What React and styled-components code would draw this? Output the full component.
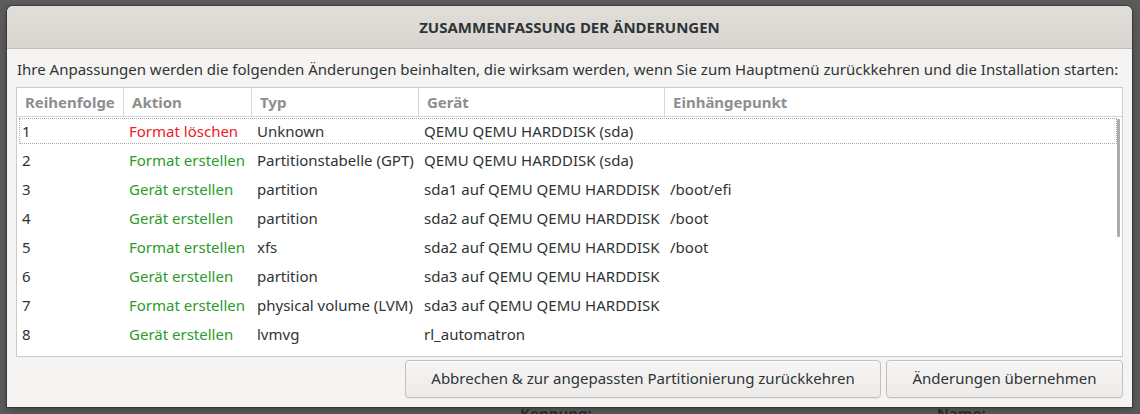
import styled, { createGlobalStyle } from "styled-components";

const GlobalStyle = createGlobalStyle`
  html, body {
    margin: 0;
    padding: 0;
    background: #5a5a5a;
  }
  body {
    font-family: "Noto Sans", "Open Sans", sans-serif;
    font-size: 15px;
    color: #2e3436;
  }
`;

// Dimmed installer window behind the dialog
const Screen = styled.div`
  width: 1140px;
  height: 414px;
  overflow: hidden;
  background: #5b5b5b;
  display: flex;
  flex-direction: column;
  padding: 6px 8px 0 7px;
  box-sizing: border-box;
`;

const Dialog = styled.div`
  width: 1125px;
  height: 401px;
  flex-shrink: 0;
  display: flex;
  flex-direction: column;
  background: #f5f4f2;
  border-radius: 6px 6px 0 0;
  box-shadow: 0 0 0 1px rgba(0, 0, 0, 0.25), 0 2px 6px rgba(0, 0, 0, 0.35);
  overflow: hidden;
`;

const TitleBar = styled.div`
  height: 42px;
  display: flex;
  align-items: center;
  justify-content: center;
  background: linear-gradient(#e1deda, #d9d6d2);
  border-bottom: 1px solid #c4bfba;
  font-weight: 700;
  font-size: 15px;
  color: #2e3436;
`;

const Body = styled.div`
  flex: 1;
  display: flex;
  flex-direction: column;
  padding: 0 9px 0 9px;
`;

const Intro = styled.div`
  height: 38px;
  display: flex;
  align-items: center;
  padding: 2px 0 0 1px;
  box-sizing: border-box;
  white-space: nowrap;
  color: #2e3436;
`;

const TableBox = styled.div`
  height: 268px;
  background: #fff;
  border: 1px solid #cdcbc8;
  position: relative;
  overflow: hidden;
`;

const Grid = styled.div`
  display: grid;
  grid-template-columns: 107px 128px 167px 246px 1fr;
`;

const HeadCell = styled.div`
  height: 29px;
  display: flex;
  align-items: center;
  padding: 0 0 1px 8px;
  box-sizing: border-box;
  font-weight: 700;
  color: #8e8e8e;
  border-bottom: 1px solid #d8d6d3;
  border-right: ${({ $last }) => ($last ? "none" : "1px solid #d8d6d3")};
  white-space: nowrap;
`;

const Row = styled.div`
  grid-column: 1 / -1;
  display: grid;
  grid-template-columns: 107px 128px 167px 246px 1fr;
  height: 28.9px;
  position: relative;
`;

const Focus = styled.div`
  position: absolute;
  left: 2px;
  right: 5px;
  top: 1px;
  bottom: 2px;
  border: 1px dotted #a9a9a9;
  pointer-events: none;
`;

const Cell = styled.div`
  display: flex;
  align-items: center;
  padding-left: 5px;
  white-space: nowrap;
  color: ${({ $tone }) =>
    $tone === "red" ? "#ef2020" : $tone === "green" ? "#2b9b2b" : "#2e3436"};
`;

const Scrollbar = styled.div`
  position: absolute;
  right: 2px;
  top: 31px;
  width: 3px;
  height: 118px;
  background: #a8afaf;
  border-radius: 1px;
`;

const Buttons = styled.div`
  display: flex;
  justify-content: flex-end;
  gap: 5px;
  padding-top: 3px;
`;

const Button = styled.button`
  height: 38px;
  width: ${({ $w }) => $w}px;
  padding: 0 0 2px;
  border: 1px solid #c3bfba;
  border-radius: 4px;
  background: linear-gradient(#f6f5f4, #edebe9);
  font-family: inherit;
  font-size: 15px;
  color: #2e3436;
  box-shadow: inset 0 1px #fff, 0 1px rgba(0, 0, 0, 0.05);
`;

const Behind = styled.div`
  display: flex;
  height: 20px;
  font-weight: 700;
  color: #2a2a2a;
  font-size: 15px;
  margin-top: -4px;
`;

const BehindLabel = styled.span`
  margin-left: ${({ $x }) => $x}px;
`;

const rows = [
  ["1", "Format löschen", "red", "Unknown", "QEMU QEMU HARDDISK (sda)", ""],
  ["2", "Format erstellen", "green", "Partitionstabelle (GPT)", "QEMU QEMU HARDDISK (sda)", ""],
  ["3", "Gerät erstellen", "green", "partition", "sda1 auf QEMU QEMU HARDDISK", "/boot/efi"],
  ["4", "Gerät erstellen", "green", "partition", "sda2 auf QEMU QEMU HARDDISK", "/boot"],
  ["5", "Format erstellen", "green", "xfs", "sda2 auf QEMU QEMU HARDDISK", "/boot"],
  ["6", "Gerät erstellen", "green", "partition", "sda3 auf QEMU QEMU HARDDISK", ""],
  ["7", "Format erstellen", "green", "physical volume (LVM)", "sda3 auf QEMU QEMU HARDDISK", ""],
  ["8", "Gerät erstellen", "green", "lvmvg", "rl_automatron", ""],
];

const headers = ["Reihenfolge", "Aktion", "Typ", "Gerät", "Einhängepunkt"];

export default function App() {
  return (
    <>
      <GlobalStyle />
      <Screen>
        <Dialog>
          <TitleBar>ZUSAMMENFASSUNG DER ÄNDERUNGEN</TitleBar>
          <Body>
            <Intro>
              Ihre Anpassungen werden die folgenden Änderungen beinhalten, die wirksam werden, wenn Sie zum Hauptmenü zurückkehren und die Installation starten:
            </Intro>
            <TableBox>
              <Grid>
                {headers.map((h, i) => (
                  <HeadCell key={h} $last={i === headers.length - 1}>
                    {h}
                  </HeadCell>
                ))}
                {rows.map((r, i) => (
                  <Row key={r[0]}>
                    {i === 0 && <Focus />}
                    <Cell>{r[0]}</Cell>
                    <Cell $tone={r[2]}>{r[1]}</Cell>
                    <Cell>{r[3]}</Cell>
                    <Cell>{r[4]}</Cell>
                    <Cell>{r[5]}</Cell>
                  </Row>
                ))}
              </Grid>
              <Scrollbar />
            </TableBox>
            <Buttons>
              <Button $w={476}>Abbrechen &amp; zur angepassten Partitionierung zurückkehren</Button>
              <Button $w={237}>Änderungen übernehmen</Button>
            </Buttons>
          </Body>
        </Dialog>
        <Behind>
          <BehindLabel $x={513}>Kennung:</BehindLabel>
          <BehindLabel $x={345}>Name:</BehindLabel>
        </Behind>
      </Screen>
    </>
  );
}
